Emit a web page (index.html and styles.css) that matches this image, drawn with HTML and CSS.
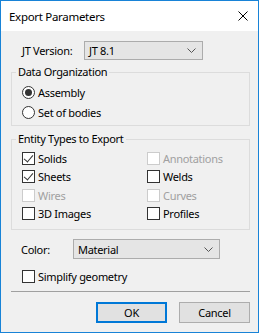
FILE: index.html
```html
<!DOCTYPE html>
<html lang="en">
<head>
    <meta charset="UTF-8">
    <title>Export Parameters</title>
    <link rel="stylesheet" href="styles.css">
</head>
<body>
    <div class="dialog">
        <div class="titlebar">
            <span class="title">Export Parameters</span>
            <svg class="close" width="10" height="10" viewBox="0 0 10 10">
                <path d="M0.5 0.5 L9.5 9.5 M9.5 0.5 L0.5 9.5" stroke="#000" stroke-width="1" fill="none"/>
            </svg>
        </div>

        <div class="content">
            <div class="field-row jt-row">
                <span class="field-label">JT Version:</span>
                <div class="combo jt-combo">
                    <span>JT 8.1</span>
                    <svg class="chevron" width="9" height="5" viewBox="0 0 9 5"><path d="M0.5 0.5 L4.5 4.5 L8.5 0.5" stroke="#555" fill="none"/></svg>
                </div>
            </div>

            <fieldset class="group org-group">
                <legend>Data Organization</legend>
                <div class="group-body">
                    <div class="option"><span class="radio checked"></span>Assembly</div>
                    <div class="option"><span class="radio"></span>Set of bodies</div>
                </div>
            </fieldset>

            <fieldset class="group entity-group">
                <legend>Entity Types to Export</legend>
                <div class="group-body check-grid">
                    <div class="option"><span class="box checked"></span>Solids</div>
                    <div class="option disabled"><span class="box"></span>Annotations</div>
                    <div class="option"><span class="box checked"></span>Sheets</div>
                    <div class="option"><span class="box"></span>Welds</div>
                    <div class="option disabled"><span class="box"></span>Wires</div>
                    <div class="option disabled"><span class="box"></span>Curves</div>
                    <div class="option"><span class="box"></span>3D Images</div>
                    <div class="option"><span class="box"></span>Profiles</div>
                </div>
            </fieldset>

            <div class="field-row color-row">
                <span class="field-label">Color:</span>
                <div class="combo color-combo">
                    <span>Material</span>
                    <svg class="chevron" width="9" height="5" viewBox="0 0 9 5"><path d="M0.5 0.5 L4.5 4.5 L8.5 0.5" stroke="#555" fill="none"/></svg>
                </div>
            </div>

            <div class="option simplify"><span class="box"></span>Simplify geometry</div>

            <div class="separator"></div>

            <div class="buttons">
                <button class="btn default">OK</button>
                <button class="btn">Cancel</button>
            </div>
        </div>
    </div>
</body>
</html>
```

FILE: styles.css
```css
* {
    box-sizing: border-box;
}
body {
    margin: 0;
    font-family: "Segoe UI", "Noto Sans", sans-serif;
    font-size: 11px;
    letter-spacing: -0.3px;
    color: #000;
    background: #fff;
}
.dialog {
    width: 259px;
    height: 333px;
    border: 1px solid #1883d7;
    background: #f0f0f0;
    display: flex;
    flex-direction: column;
}
.titlebar {
    height: 30px;
    background: #fff;
    display: flex;
    align-items: center;
    justify-content: space-between;
    padding: 0 10px 0 8px;
}
.title {
    font-size: 11.5px;
}
.content {
    flex: 1;
    padding: 0 8px 0 10px;
    display: flex;
    flex-direction: column;
}
.field-row {
    display: flex;
    align-items: center;
}
.jt-row {
    margin-top: 10px;
    padding-left: 11px;
}
.jt-row .field-label {
    width: 62px;
}
.color-row {
    margin-top: 9px;
    padding-left: 10px;
}
.color-row .field-label {
    width: 52px;
}
.combo {
    height: 19px;
    background: #e5e5e5;
    border: 1px solid #acacac;
    display: flex;
    align-items: center;
    justify-content: space-between;
    padding: 0 6px 0 4px;
}
.jt-combo {
    width: 119px;
}
.color-combo {
    width: 147px;
    height: 20px;
}
.group {
    margin: 0;
    padding: 0;
    border: 1px solid #dcdcdc;
    min-width: 0;
}
.group legend {
    padding: 0 2px;
    margin-left: 4px;
    line-height: 14px;
}
.group-body {
    padding-left: 10px;
}
.org-group {
    margin-top: 5px;
    padding-top: 3px;
    padding-bottom: 3px;
}
.org-group .option {
    height: 20px;
}
.entity-group {
    margin-top: 6px;
    padding-top: 3px;
    padding-bottom: 6px;
}
.check-grid {
    display: grid;
    grid-template-columns: 125px 1fr;
    grid-auto-rows: 18.5px;
}
.option {
    display: flex;
    align-items: center;
}
.option.disabled {
    color: #a0a0a0;
}
.radio {
    width: 13px;
    height: 13px;
    border: 1px solid #333;
    border-radius: 50%;
    background: #fff;
    margin-right: 3px;
    display: flex;
    align-items: center;
    justify-content: center;
}
.radio.checked::after {
    content: "";
    width: 7px;
    height: 7px;
    border-radius: 50%;
    background: #333;
}
.box {
    width: 13px;
    height: 13px;
    border: 1px solid #333;
    background: #fff;
    margin-right: 3px;
    position: relative;
}
.disabled .box {
    border-color: #cccccc;
}
.box.checked::after {
    content: "";
    position: absolute;
    left: 3px;
    top: 0px;
    width: 4px;
    height: 8px;
    border: solid #333;
    border-width: 0 1px 1px 0;
    transform: rotate(40deg);
}
.simplify {
    height: 18px;
    margin-top: 8px;
    padding-left: 11px;
}
.separator {
    height: 1px;
    background: #a0a0a0;
    margin-top: 6px;
}
.buttons {
    display: flex;
    justify-content: flex-end;
    gap: 12px;
    margin-top: 10px;
}
.btn {
    width: 71px;
    height: 21px;
    font-family: inherit;
    font-size: 11px;
    letter-spacing: inherit;
    background: #e1e1e1;
    border: 1px solid #adadad;
    padding: 0;
    color: #000;
}
.btn.default {
    border: 2px solid #0078d7;
}
```
